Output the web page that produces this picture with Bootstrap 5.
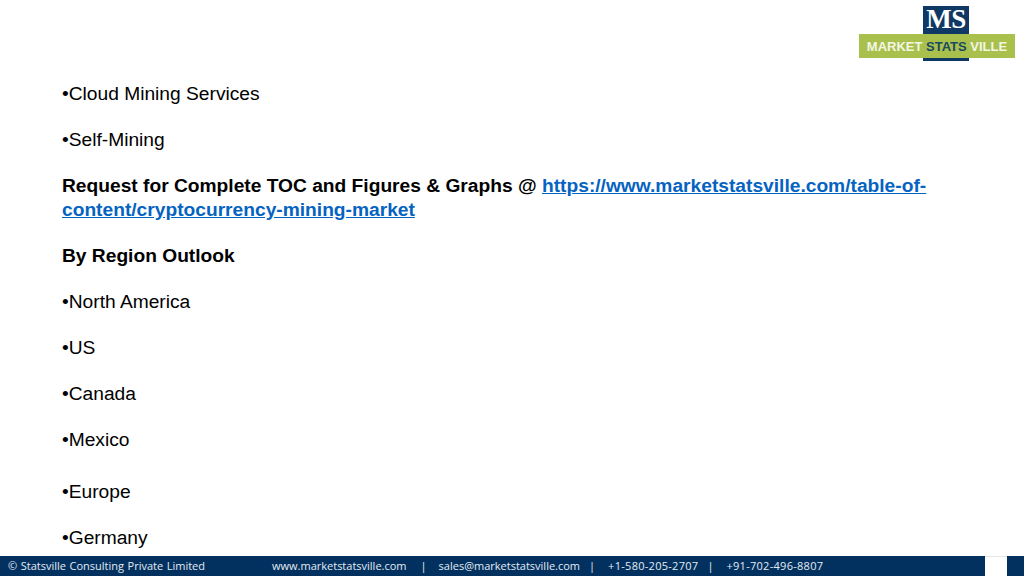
<!DOCTYPE html>
<html lang="en">
<head>
<meta charset="utf-8">
<title>Market Stats Ville</title>
<link href="https://cdn.jsdelivr.net/npm/bootstrap@5.3.0/dist/css/bootstrap.min.css" rel="stylesheet">
<style>
html,body{height:576px;overflow:hidden;background:#fff}
.slide-page{width:1024px;height:576px;font-family:"Liberation Sans",Arial,sans-serif;color:#000}
.logo-zone{height:61px;padding-top:6px;padding-right:9px}
.logo-wrap{width:156px;height:55px}
.logo-navy{width:46px;height:55px;margin-left:64px;background:#0f3864;color:#fff;font-family:"Liberation Serif",serif;font-size:27px;font-weight:700;line-height:26px;letter-spacing:-.5px;text-align:center}
.logo-bar{position:absolute;left:0;right:0;top:28px;height:24px;background:#a9c04d;font-size:13px;font-weight:700;line-height:25px;color:#f3f6e4;white-space:nowrap;text-align:center}
.logo-dark{color:#1a4a5e}
.text-zone{height:495px;padding:21px 90px 0 62px;font-size:19.2px;line-height:24px}
.text-zone p{margin:0 0 22px}
.text-zone .gap-extra{margin-bottom:28px}
.text-zone a{color:#0563c1}
.foot-bar{height:20px;font-family:"Open Sans","Noto Sans",sans-serif;font-size:11px;line-height:20px;color:#e4ebf3}
.foot-main{width:985px;background:#03315f;padding-left:8px}
.foot-copy{width:264px;word-spacing:.7px}
.foot-sep{margin:0 12px 0 14px}
.foot-sep-tight{margin:0 13px 0 9px}
.foot-num{letter-spacing:.28px}
.foot-blank{width:22px;background:#fff;border-top:1px solid #e6e6e6}
.foot-end{width:17px;background:#03315f}
</style>
</head>
<body>
<div class="slide-page d-flex flex-column">
  <div class="logo-zone d-flex justify-content-end">
    <div class="logo-wrap position-relative">
      <div class="logo-navy">MS</div>
      <div class="logo-bar">MARKET <span class="logo-dark">STATS</span> VILLE</div>
    </div>
  </div>
  <div class="text-zone">
    <p>•Cloud Mining Services</p>
    <p>•Self-Mining</p>
    <p class="fw-bold">Request for Complete TOC and Figures &amp; Graphs @ <a href="#">https://www.marketstatsville.com/table-of-<br>content/cryptocurrency-mining-market</a></p>
    <p class="fw-bold">By Region Outlook</p>
    <p>•North America</p>
    <p>•US</p>
    <p>•Canada</p>
    <p class="gap-extra">•Mexico</p>
    <p>•Europe</p>
    <p>•Germany</p>
  </div>
  <div class="foot-bar d-flex">
    <div class="foot-main d-flex">
      <span class="foot-copy">© Statsville Consulting Private Limited</span>
      <span>www.marketstatsville.com</span><span class="foot-sep">|</span>
      <span>sales@marketstatsville.com</span><span class="foot-sep-tight">|</span>
      <span class="foot-num">+1-580-205-2707</span><span class="foot-sep-tight">|</span>
      <span class="foot-num">+91-702-496-8807</span>
    </div>
    <div class="foot-blank"></div>
    <div class="foot-end"></div>
  </div>
</div>
<script src="https://cdn.jsdelivr.net/npm/bootstrap@5.3.0/dist/js/bootstrap.bundle.min.js"></script>
</body>
</html>
